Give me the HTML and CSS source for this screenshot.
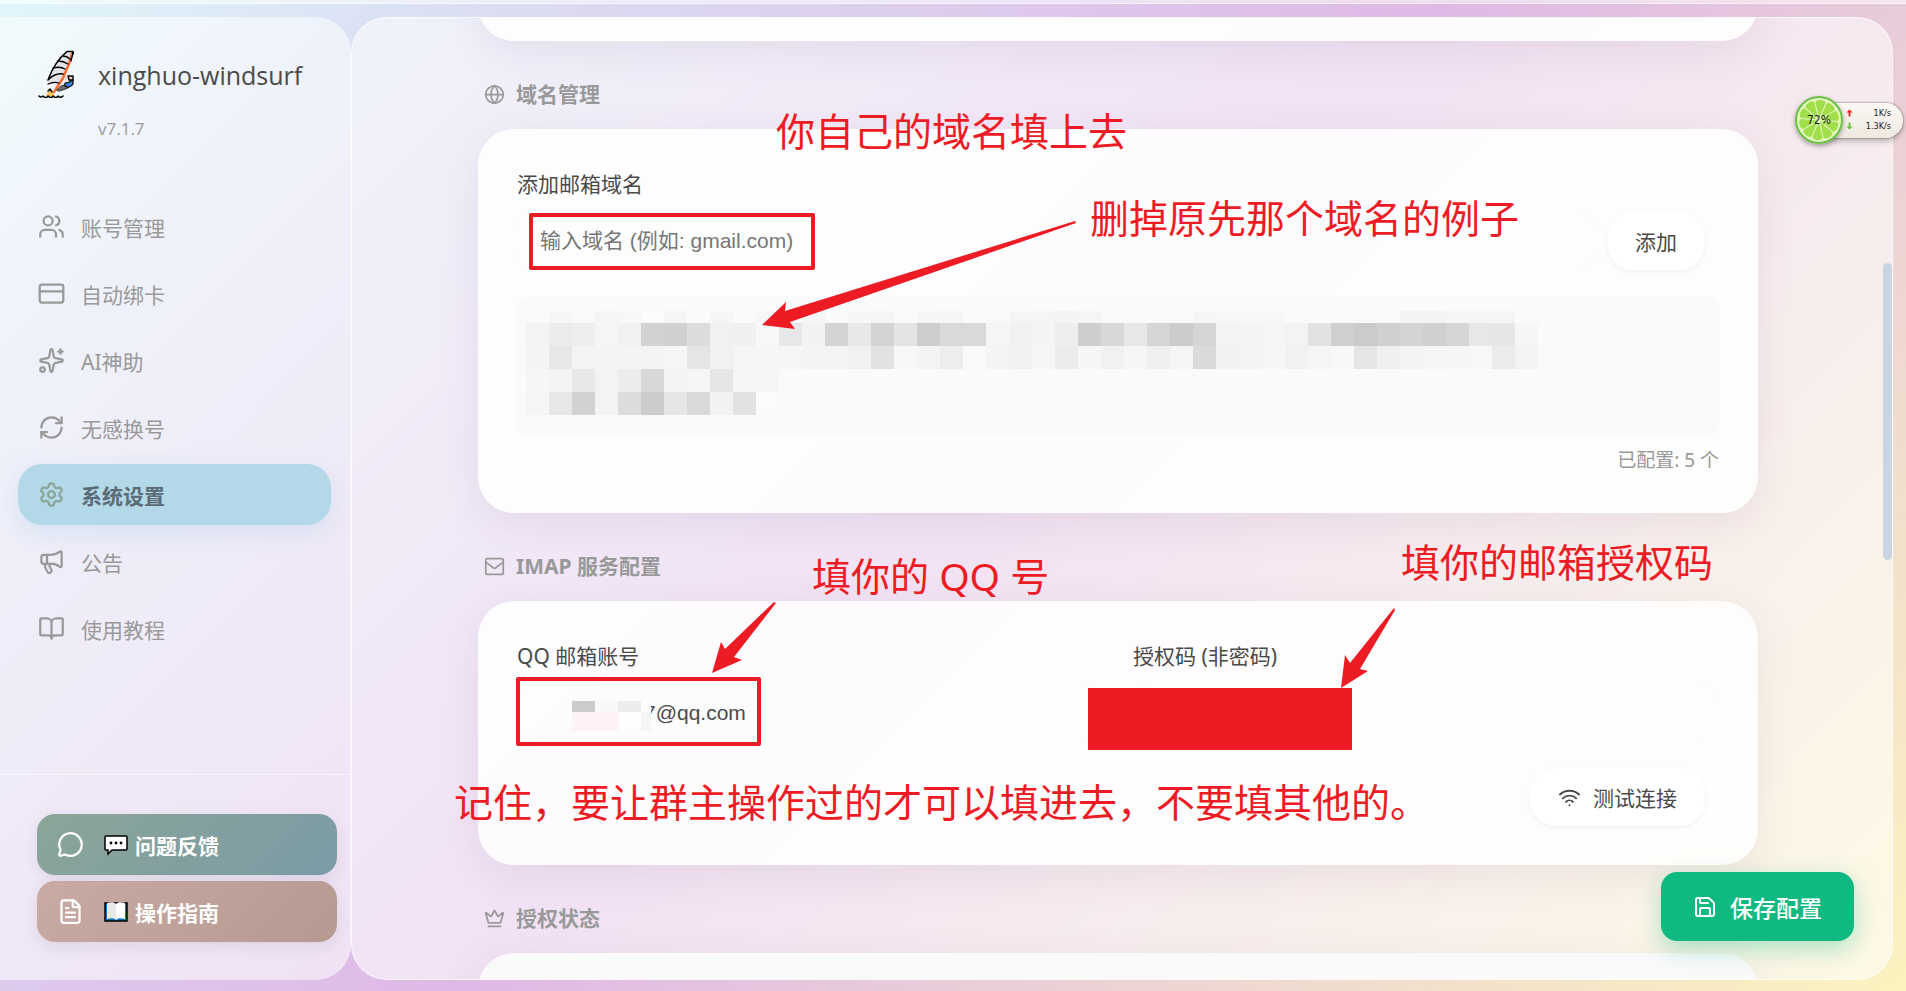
FILE: index.html
```html
<!DOCTYPE html>
<html lang="zh-CN">
<head>
    <meta charset="UTF-8">
    <meta name="viewport" content="width=device-width, initial-scale=1.0">
    <title>xinghuo-windsurf</title>
    <link rel="stylesheet" href="styles.css">
</head>
<body>
    <div class="titlebar"></div>
    <div class="app">
        <aside class="sidebar">
            <div class="brand">
                <svg class="logo" viewBox="0 0 36 48" fill="none" stroke="#000" stroke-linecap="round" stroke-linejoin="round">
                    <path d="M28 1.500C21 7 14 18 10 31l1 5c4-3 8-3 12-1l9-22 2-11z" fill="#e3e3e8" stroke="none"/>
                    <path d="M34 3 31 14 25 28 16 42" stroke="#ff6b35" stroke-width="2.500"/>
                    <path d="M35 4V1.500h-6C21 8 14 19 10 30c4-4 9-7 15-6" stroke-width="1.600"/>
                    <path d="M25 6c3 0 5 1 7 3M20 11c4 0 7 1 10 3M15 18c4-1 9-1 12 1M10 34c4-2 8-2 11-1M35 3l-2 8" stroke-width="1.300"/>
                    <path d="M19 40c4-5 6-5 9-5l2 3-8 3z" fill="#6b6b70" stroke="#333" stroke-width="1"/>
                    <path d="M27 33c3 0 5-1 8-3v4c-2 3-5 4-8 2z" fill="#2b86e8" stroke-width="1.200"/>
                    <path d="M30 26h5v4h-4z" fill="#f7c9b0" stroke-width="1.400"/>
                    <path d="M28 27v4" stroke="#f7c9b0" stroke-width="1.500"/>
                    <path d="M8 46c1-3 3-6 4-7 1 2 4 4 5 7z" fill="#ffc261" stroke="none"/>
                    <path d="m10 41 2-2 2 3" stroke-width="1.400"/>
                    <path d="M1 46c2 2 3 1 4 0 2 2 4 2 5 0 2 2 4 2 5 0 2 2 4 2 5 0 2 2 4 1 5 0" stroke-width="1.600"/>
                </svg>
                <div>
                    <h1>xinghuo-windsurf</h1>
                    <div class="version">v7.1.7</div>
                </div>
            </div>

            <nav class="nav">
                <a class="nav-item" href="#accounts">
                    <svg class="icon" viewBox="0 0 24 24"><path d="M16 21v-2a4 4 0 0 0-4-4H6a4 4 0 0 0-4 4v2"/><circle cx="9" cy="7" r="4"/><path d="M22 21v-2a4 4 0 0 0-3-3.870M16 3.130a4 4 0 0 1 0 7.750"/></svg>
                    <span>账号管理</span>
                </a>
                <a class="nav-item" href="#card">
                    <svg class="icon" viewBox="0 0 24 24"><rect x="1.500" y="4" width="21" height="16" rx="2"/><path d="M2 10h20"/></svg>
                    <span>自动绑卡</span>
                </a>
                <a class="nav-item" href="#ai">
                    <svg class="icon" viewBox="0 0 24 24"><path d="M11.017 2.814a1 1 0 0 1 1.966 0l1.051 5.558a2 2 0 0 0 1.594 1.594l5.558 1.051a1 1 0 0 1 0 1.966l-5.558 1.051a2 2 0 0 0-1.594 1.594l-1.051 5.558a1 1 0 0 1-1.966 0l-1.051-5.558a2 2 0 0 0-1.594-1.594l-5.558-1.051a1 1 0 0 1 0-1.966l5.558-1.051a2 2 0 0 0 1.594-1.594zM20 2v4M22 4h-4"/><circle cx="4" cy="20" r="2"/></svg>
                    <span>AI神助</span>
                </a>
                <a class="nav-item" href="#switch">
                    <svg class="icon" viewBox="0 0 24 24"><path d="M3 12a9 9 0 0 1 9-9 9.750 9.750 0 0 1 6.740 2.740L21 8"/><path d="M21 3v5h-5M21 12a9 9 0 0 1-9 9 9.750 9.750 0 0 1-6.740-2.740L3 16"/><path d="M8 16H3v5"/></svg>
                    <span>无感换号</span>
                </a>
                <a class="nav-item active" href="#settings">
                    <svg class="icon" viewBox="0 0 24 24"><path d="M9.671 4.136a2.340 2.340 0 0 1 4.659 0 2.340 2.340 0 0 0 3.319 1.915 2.340 2.340 0 0 1 2.330 4.033 2.340 2.340 0 0 0 0 3.831 2.340 2.340 0 0 1-2.330 4.033 2.340 2.340 0 0 0-3.319 1.915 2.340 2.340 0 0 1-4.659 0 2.340 2.340 0 0 0-3.320-1.915 2.340 2.340 0 0 1-2.330-4.033 2.340 2.340 0 0 0 0-3.831A2.340 2.340 0 0 1 6.350 6.051a2.340 2.340 0 0 0 3.319-1.915"/><circle cx="12" cy="12" r="3"/></svg>
                    <span>系统设置</span>
                </a>
                <a class="nav-item" href="#notice">
                    <svg class="icon" viewBox="0 0 24 24"><path d="M11 6a13 13 0 0 0 8.400-2.800A1 1 0 0 1 21 4v12a1 1 0 0 1-1.600.800A13 13 0 0 0 11 14H5a2 2 0 0 1-2-2V8a2 2 0 0 1 2-2z"/><path d="M6 14a12 12 0 0 0 2.400 7.200 2 2 0 0 0 3.200-2.400A8 8 0 0 1 10 14M8 6v8"/></svg>
                    <span>公告</span>
                </a>
                <a class="nav-item" href="#tutorial">
                    <svg class="icon" viewBox="0 0 24 24"><path d="M12 7v14M3 18a1 1 0 0 1-1-1V4a1 1 0 0 1 1-1h5a4 4 0 0 1 4 4 4 4 0 0 1 4-4h5a1 1 0 0 1 1 1v13a1 1 0 0 1-1 1h-6a3 3 0 0 0-3 3 3 3 0 0 0-3-3z"/></svg>
                    <span>使用教程</span>
                </a>
            </nav>

            <div class="sidebar-footer">
                <button class="side-btn feedback">
                    <svg class="icon" viewBox="0 0 24 24"><path d="M2.992 16.342a2 2 0 0 1 .094 1.167l-1.065 3.290a1 1 0 0 0 1.236 1.168l3.413-.998a2 2 0 0 1 1.099.092 10 10 0 1 0-4.777-4.719"/></svg>
                    <svg class="emoji" viewBox="0 0 24 24"><path d="M2 3h20a1 1 0 0 1 1 1v12a1 1 0 0 1-1 1H8l-4 4v-4H2a1 1 0 0 1-1-1V4a1 1 0 0 1 1-1z" fill="#fff" stroke="#000" stroke-width="1.500"/><circle cx="7" cy="10" r="1.400"/><circle cx="12" cy="10" r="1.400"/><circle cx="17" cy="10" r="1.400"/></svg>
                    <span>问题反馈</span>
                </button>
                <button class="side-btn guide">
                    <svg class="icon" viewBox="0 0 24 24"><path d="M6 22a2 2 0 0 1-2-2V4a2 2 0 0 1 2-2h8a2.400 2.400 0 0 1 1.704.706l3.588 3.588A2.400 2.400 0 0 1 20 8v12a2 2 0 0 1-2 2z"/><path d="M14 2v5a1 1 0 0 0 1 1h5M10 9H8M16 13H8M16 17H8"/></svg>
                    <svg class="emoji" viewBox="0 0 24 24"><path d="M1 3h22v18H1z" fill="#1272c4" stroke="#000" stroke-width="1.500"/><path d="M3 3c4-1 7-1 9 1v16c-2-2-5-2-9-1z" fill="#e9e9ec"/><path d="M21 3c-4-1-7-1-9 1v16c2-2 5-2 9-1z" fill="#fff"/></svg>
                    <span>操作指南</span>
                </button>
            </div>
        </aside>

        <main class="panel">
            <div class="content">
                <section class="card card-prev"></section>

                <h2 class="section-title">
                    <svg class="icon" viewBox="0 0 24 24"><circle cx="12" cy="12" r="10"/><path d="M12 2a14.500 14.500 0 0 0 0 20 14.500 14.500 0 0 0 0-20M2 12h20"/></svg>
                    域名管理
                </h2>
                <section class="card">
                    <label class="field-label" for="domain">添加邮箱域名</label>
                    <div class="input-row">
                        <input class="input" type="text" id="domain" placeholder="输入域名 (例如: gmail.com)">
                        <button class="btn">添加</button>
                    </div>
                    <div class="domain-list">
                        <svg id="mosaic" width="1012" height="104" shape-rendering="crispEdges"></svg>
                    </div>
                    <div class="count">已配置: 5 个</div>
                </section>

                <h2 class="section-title">
                    <svg class="icon" viewBox="0 0 24 24"><rect x="2" y="3" width="20" height="18" rx="2"/><path d="m2 7 8.970 6.700a1.940 1.940 0 0 0 2.060 0L22 7"/></svg>
                    IMAP 服务配置
                </h2>
                <section class="card">
                    <div class="grid">
                        <div>
                            <label class="field-label" for="email">QQ 邮箱账号</label>
                            <input class="input email" type="text" id="email" value="7@qq.com">
                        </div>
                        <div>
                            <label class="field-label" for="code">授权码 (非密码)</label>
                            <input class="input" type="password" id="code">
                        </div>
                    </div>
                    <div class="actions">
                        <button class="btn">
                            <svg class="icon" viewBox="0 0 24 24"><path d="M12 20h.010M2 8.820a15 15 0 0 1 20 0M5 12.859a10 10 0 0 1 14 0M8.500 16.429a5 5 0 0 1 7 0"/></svg>
                            测试连接
                        </button>
                    </div>
                </section>

                <h2 class="section-title">
                    <svg class="icon" viewBox="0 0 24 24"><path d="M11.562 3.266a.5.5 0 0 1 .876 0L15.390 8.870a1 1 0 0 0 1.516.294L21.183 5.500a.5.5 0 0 1 .798.519l-2.834 10.246a1 1 0 0 1-.956.734H5.810a1 1 0 0 1-.957-.734L2.020 6.020a.5.5 0 0 1 .798-.519l4.276 3.664a1 1 0 0 0 1.516-.294zM5 21h14"/></svg>
                    授权状态
                </h2>
                <section class="card card-next"></section>
            </div>
            <div class="scroll-thumb"></div>
        </main>
    </div>

    <button class="save-btn">
        <svg class="icon" viewBox="0 0 24 24"><path d="M15.200 3a2 2 0 0 1 1.400.6l3.800 3.800a2 2 0 0 1 .6 1.400V19a2 2 0 0 1-2 2H5a2 2 0 0 1-2-2V5a2 2 0 0 1 2-2z"/><path d="M17 21v-7a1 1 0 0 0-1-1H8a1 1 0 0 0-1 1v7M7 3v4a1 1 0 0 0 1 1h7"/></svg>
        保存配置
    </button>

    <!-- 网速悬浮球 -->
    <div class="speed">
        <div class="speed-pill">
            <div><svg viewBox="0 0 8 8"><path d="M4 0l3.500 3.500H5V8H3V3.500H.5z" fill="#ee2222"/></svg><span>1K/s</span></div>
            <div><svg viewBox="0 0 8 8"><path d="M4 8l3.500-3.500H5V0H3v4.500H.5z" fill="#6cbb45"/></svg><span>1.3K/s</span></div>
        </div>
        <div class="speed-ball">
            <svg viewBox="0 0 48 48">
                <circle cx="24" cy="24" r="23" fill="#e4f6bd" stroke="#6bbf45" stroke-width="2"/>
                <g id="lime" fill="#a0df4a"></g>
            </svg>
            <span>72%</span>
        </div>
    </div>

    <!-- 标注 -->
    <div class="notes">
        <p class="note note-domain">你自己的域名填上去</p>
        <p class="note note-delete">删掉原先那个域名的例子</p>
        <p class="note note-qq">填你的 QQ 号</p>
        <p class="note note-code">填你的邮箱授权码</p>
        <p class="note note-remember">记住，要让群主操作过的才可以填进去，不要填其他的。</p>
        <div class="frame frame-domain"></div>
        <div class="frame frame-email"></div>
        <div class="block-code"></div>
        <svg class="arrows" width="1906" height="991">
            <path d="M762 325 786 302 785 311 1075 221 1076 223 790 322 795 329z"/>
            <path d="M712 673 721 642 725 649 774 602 776 603 734 657 742 660z"/>
            <path d="M1341 688 1345 655 1350 663 1394 608 1395 610 1360 669 1368 671z"/>
            <g shape-rendering="crispEdges">
                <path fill="#fdfdfd" d="M572 701h79v30h-79z"/>
                <path fill="#cbcbcb" d="M572 701h23v11h-23z"/>
                <path fill="#f8f8f8" d="M595 701h23v11h-23z"/>
                <path fill="#ececec" d="M618 701h23v11h-23z"/>
                <path fill="#fff2f4" d="M572 712h46v19h-46z"/>
                <path fill="#f4f4f4" d="M641 712h10v19h-10z"/>
            </g>
        </svg>
    </div>

    <script>
        const svgNS = "http://www.w3.org/2000/svg";

        // 马赛克灰度，每两位一格，".." 为空
        const rows = [
            { y: 0, h: 12, cells: "..f6..f5f7fcf5..f6..f6..f5..f6f5..f6f5....f6f5f4f5........f6f7f7f7f9........f3f4f5f5f5.." },
            { y: 12, h: 23, cells: "f3ebeef5f1d2d0dcf1f0f7e7f2d4e8d4e4cdd9d9f5f1f4eeced8e7d5ccd5f3f4f6f3e2cfcbd0d4d0d5e7e6f6" },
            { y: 35, h: 23, cells: "f4e7f3f4f4f4f6e5f1f5f6f5f4f4f1e2f7f4edf9f4f1f6ebf6f1f6eff5daf2f4f6f1f5f8e5f0f3f5f6f7ebf4" },
            { y: 58, h: 23, cells: "f6f4e8f3ecd8f4f5e6f5f6" },
            { y: 81, h: 23, cells: "f5e7d2f3dccce6d9f2e2fb" }
        ];

        const mosaic = document.getElementById("mosaic");
        rows.forEach(row => {
            for (let i = 0; i < row.cells.length / 2; i++) {
                const v = row.cells.substr(i * 2, 2);
                if (v === "..") continue;
                const g = parseInt(v, 16);
                const rect = document.createElementNS(svgNS, "rect");
                rect.setAttribute("x", i * 23);
                rect.setAttribute("y", row.y);
                rect.setAttribute("width", 23);
                rect.setAttribute("height", row.h);
                rect.setAttribute("fill", `rgb(${g}, ${g}, ${g + 2})`);
                mosaic.appendChild(rect);
            }
        });

        // 青柠果瓣
        for (let a = 0; a < 360; a += 36) {
            const slice = document.createElementNS(svgNS, "path");
            slice.setAttribute("d", "M24 22 19 7Q19 4 24 4Q29 4 29 7z");
            slice.setAttribute("transform", `rotate(${a + 5} 24 24)`);
            document.getElementById("lime").appendChild(slice);
        }
    </script>
</body>
</html>
```
FILE: styles.css
```css
* {
    box-sizing: border-box;
}

body {
    margin: 0;
    height: 100vh;
    display: flex;
    flex-direction: column;
    position: relative;
    overflow: hidden;
    font-family: "Noto Sans", "Noto Sans CJK SC", sans-serif;
    font-size: 21px;
    color: #4a4a4a;
    background: linear-gradient(135deg, #e0f7fa 0%, #dbe1f4 14%, #dfb9e6 50%, #fcf3bf 100%);
}

h1, h2, p {
    margin: 0;
}

button, input {
    font-family: inherit;
    font-size: 21px;
    color: inherit;
    border: none;
}

button {
    cursor: pointer;
}

.icon {
    flex: none;
    width: 27px;
    height: 27px;
    fill: none;
    stroke: currentColor;
    stroke-width: 2;
    stroke-linecap: round;
    stroke-linejoin: round;
}

.titlebar {
    flex: none;
    height: 4px;
    background: rgba(255, 255, 255, 0.5);
    border-bottom: 1px solid rgba(255, 255, 255, 0.6);
}

.app {
    flex: 1;
    min-height: 0;
    display: flex;
    padding: 13px 13px 11px 0;
}

/* 侧边栏 */
.sidebar {
    flex: none;
    width: 351px;
    display: flex;
    flex-direction: column;
    background: rgba(255, 255, 255, 0.55);
    border-right: 1px solid rgba(255, 255, 255, 0.5);
    border-radius: 0 36px 36px 0;
}

.brand {
    display: flex;
    gap: 24px;
    padding: 33px 18px 0 38px;
    height: 179px;
}

.logo {
    flex: none;
    width: 36px;
    height: 48px;
}

.brand h1 {
    margin-top: 7px;
    font-family: "Open Sans", sans-serif;
    font-size: 25px;
    font-weight: 500;
    line-height: 36px;
    color: #4a4a4a;
}

.version {
    margin-top: 26px;
    font-family: "Open Sans", sans-serif;
    font-size: 17px;
    line-height: 20px;
    color: #999;
}

.nav {
    flex: 1;
    display: flex;
    flex-direction: column;
    gap: 6px;
    padding: 0 19px 0 18px;
}

.nav-item {
    display: flex;
    align-items: center;
    gap: 16px;
    height: 61px;
    padding: 0 20px;
    border-radius: 24px;
    color: #999;
    text-decoration: none;
}

.nav-item.active {
    background: #b3d8e8;
    color: #5a6b76;
    font-weight: bold;
    box-shadow: 0 8px 24px rgba(160, 200, 225, 0.3);
}

.nav-item.active .icon {
    color: #8ba598;
}

.sidebar-footer {
    display: flex;
    flex-direction: column;
    gap: 6px;
    padding: 39px 13px 38px 37px;
    border-top: 1px solid rgba(255, 255, 255, 0.6);
}

.side-btn {
    display: flex;
    align-items: center;
    height: 61px;
    padding: 0 20px;
    border-radius: 18px;
    color: #fff;
    font-weight: bold;
    box-shadow: 0 5px 16px rgba(0, 0, 0, 0.08);
}

.feedback {
    background: linear-gradient(135deg, #8ba598, #7b9ba6);
}

.guide {
    background: linear-gradient(135deg, #c9aaa4, #b59a91);
}

.emoji {
    width: 24px;
    height: 24px;
    margin: 0 7px 0 20px;
}

/* 主面板 */
.panel {
    flex: 1;
    min-width: 0;
    position: relative;
    overflow: hidden;
    padding: 0 8px 0 0;
    background: rgba(255, 255, 255, 0.58);
    border: 1px solid rgba(255, 255, 255, 0.65);
    border-radius: 36px;
}

.content {
    max-width: 1280px;
    margin: -77px auto 0;
}

.scroll-thumb {
    position: absolute;
    top: 245px;
    right: 0;
    width: 9px;
    height: 297px;
    border-radius: 5px;
    background: #c9d5e3;
}

.card {
    padding: 38px 39px;
    border-radius: 36px;
    background: rgba(255, 255, 255, 0.86);
    border-bottom: 1px solid rgba(255, 255, 255, 0.3);
    box-shadow: 0 10px 40px rgba(100, 70, 110, 0.09);
}

.card-prev {
    height: 100px;
}

.card-next {
    height: 200px;
    background: #fafafa;
}

.section-title {
    display: flex;
    align-items: center;
    gap: 11px;
    margin: 37px 0 19px 6px;
    font-size: 21px;
    font-weight: bold;
    line-height: 32px;
    color: #999;
}

.section-title .icon {
    width: 21px;
    height: 21px;
}

.field-label {
    display: block;
    margin-bottom: 10px;
    line-height: 35px;
}

.input-row {
    display: flex;
    gap: 13px;
    padding-right: 14px;
}

.input {
    flex: 1;
    width: 100%;
    height: 58px;
    padding: 0 23px;
    border-radius: 18px;
    background: rgba(253, 253, 253, 0.8);
    font-family: "Liberation Sans", "Noto Sans CJK SC", sans-serif;
    outline: none;
}

.input::placeholder {
    color: #777;
}

.email {
    padding-left: 127px;
}

.btn {
    display: flex;
    align-items: center;
    gap: 12px;
    height: 58px;
    padding: 0 28px;
    border-radius: 26px;
    background: #fff;
    box-shadow: 0 2px 5px rgba(0, 0, 0, 0.05);
}

.btn .icon {
    width: 23px;
    height: 23px;
}

.domain-list {
    height: 138px;
    margin-top: 27px;
    padding: 14px 9px;
    border-radius: 12px;
    background: #f9fafc;
    overflow: hidden;
}

.count {
    margin-top: 11px;
    font-size: 19px;
    line-height: 28px;
    text-align: right;
    color: #999;
}

.grid {
    display: grid;
    grid-template-columns: 1fr 1fr;
    gap: 30px;
}

.actions {
    display: flex;
    justify-content: flex-end;
    padding-right: 14px;
    margin-top: 26px;
}

.save-btn {
    position: absolute;
    right: 52px;
    bottom: 50px;
    display: flex;
    align-items: center;
    gap: 13px;
    height: 69px;
    padding: 0 32px;
    border-radius: 16px;
    background: #10b981;
    color: #fff;
    font-size: 23px;
    font-weight: 500;
    box-shadow: 0 8px 24px rgba(16, 185, 129, 0.35);
}

.save-btn .icon {
    width: 24px;
    height: 24px;
}

/* 网速悬浮球 */
.speed {
    position: absolute;
    top: 96px;
    right: 3px;
    width: 108px;
    height: 48px;
    display: flex;
    align-items: center;
    font-family: "DejaVu Sans Condensed", "DejaVu Sans", sans-serif;
    color: #222;
}

.speed-pill {
    flex: 1;
    height: 35px;
    margin-left: 24px;
    padding: 4px 12px 0 27px;
    border-radius: 0 18px 18px 0;
    background: linear-gradient(#fbf8f4, #efe9df);
    box-shadow: 0 0 2px rgba(0, 0, 0, 0.6), 0 3px 6px rgba(0, 0, 0, 0.25);
    font-size: 9px;
    line-height: 13px;
}

.speed-pill div {
    display: flex;
    align-items: center;
    justify-content: space-between;
}

.speed-pill svg {
    width: 7px;
    height: 8px;
}

.speed-ball {
    position: absolute;
    left: 0;
    top: 0;
    width: 48px;
    height: 48px;
    border-radius: 50%;
    box-shadow: 0 2px 5px rgba(0, 0, 0, 0.35);
    display: grid;
    place-items: center;
    font-size: 12px;
}

.speed-ball svg, .speed-ball span {
    grid-area: 1 / 1;
}

/* 标注 */
.notes {
    position: absolute;
    inset: 0;
    pointer-events: none;
}

.note {
    position: absolute;
    font-size: 39px;
    line-height: 48px;
    white-space: nowrap;
    color: #ed1c24;
}

.note-domain {
    left: 776px;
    top: 107px;
}

.note-delete {
    left: 1090px;
    top: 194px;
}

.note-qq {
    left: 812px;
    top: 552px;
}

.note-code {
    left: 1401px;
    top: 538px;
}

.note-remember {
    left: 454px;
    top: 778px;
}

.frame {
    position: absolute;
    border: 4px solid #ed1c24;
    border-radius: 2px;
}

.frame-domain {
    left: 529px;
    top: 213px;
    width: 286px;
    height: 57px;
}

.frame-email {
    left: 516px;
    top: 677px;
    width: 245px;
    height: 69px;
}

.block-code {
    position: absolute;
    left: 1088px;
    top: 688px;
    width: 264px;
    height: 62px;
    background: #ed1c24;
}

.arrows {
    position: absolute;
    left: 0;
    top: 0;
    fill: #ed1c24;
}
```
